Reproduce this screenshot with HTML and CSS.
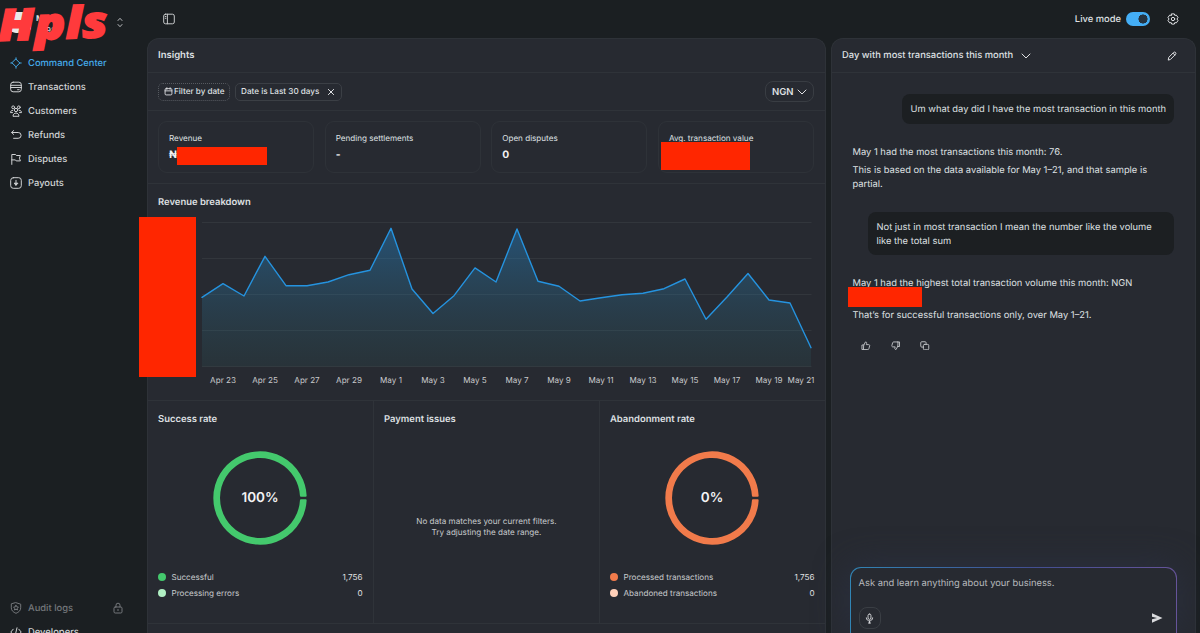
FILE: index.html
```html
<!DOCTYPE html>
<html lang="en">
<head>
<meta charset="utf-8">
<title>Command Center</title>
<link rel="stylesheet" href="styles.css">
</head>
<body>
<div class="app">
  <aside class="sidebar">
    <div class="account">
      <div class="avatar"></div>
      <div class="account-text"><b>M</b><span>988</span></div>
      <svg class="switcher" viewBox="0 0 8 12"><path d="M2 4l2-2.200L6 4M2 8l2 2.200L6 8"/></svg>
      <div class="scribble">Hpls</div>
    </div>
    <nav class="nav">
      <a class="active"><svg viewBox="0 0 12 12"><path d="M6 2.200L9.800 6 6 9.800 2.200 6zM6 .8v1.400M6 9.800v1.400M.8 6h1.400M9.800 6h1.400"/></svg>Command Center</a>
      <a><svg viewBox="0 0 12 12"><rect x=".7" y="1.200" width="10.600" height="9.600" rx="2.400"/><path d="M.7 4.300h10.600M.7 6.500h10.600M7.600 8.700h1.600"/></svg>Transactions</a>
      <a><svg viewBox="0 0 12 12"><circle cx="6" cy="5" r="1.700"/><circle cx="3.200" cy="2.300" r="1.400"/><circle cx="8.800" cy="2.300" r="1.400"/><path d="M3 10.900c0-3.900 6-3.900 6 0zM2.700 5.300C1.300 5.300.5 6.200.5 7.600h2M9.300 5.300c1.400 0 2.200.9 2.200 2.300h-2"/></svg>Customers</a>
      <a><svg viewBox="0 0 12 12"><path d="M3.600 1.600L1.600 3.500l2 1.900M1.800 3.500h6.400a2.900 2.900 0 0 1 0 5.800H3.600"/></svg>Refunds</a>
      <a><svg viewBox="0 0 12 12"><path d="M1.800 11.400V1.500h3.800l.8 1h4l-1 2.700 1 2.700H6.200l-.8-1H1.800"/></svg>Disputes</a>
      <a><svg viewBox="0 0 12 12"><rect x=".7" y=".7" width="10.600" height="10.600" rx="2.600"/><path fill="currentColor" d="M6 3.300v5M4.300 6.500L6 8.200l1.700-1.700z"/></svg>Payouts</a>
    </nav>
    <nav class="nav nav-bottom">
      <a class="locked"><svg viewBox="0 0 12 12"><path d="M6 .7l4.700 1.500v3.600c0 2.700-2 4.500-4.700 5.500C3.300 10.300 1.300 8.500 1.300 5.800V2.200z"/><path d="M6 3.300l.8 1.500 1.600.3-1.100 1.200.2 1.700L6 7.300 4.500 8l.2-1.700-1.100-1.200 1.600-.3z"/></svg>Audit logs
        <svg class="lock" viewBox="0 0 10 12"><rect x="1" y="5" width="8" height="6" rx="1.200"/><path d="M3 5V3.200a2 2 0 0 1 4 0V5M5 7.400v1.200"/></svg></a>
      <a><svg viewBox="0 0 12 12"><path d="M3.200 3.200L.8 6l2.400 2.800M8.800 3.200L11.200 6 8.800 8.800M7 1.800L5 10.200"/></svg>Developers</a>
    </nav>
  </aside>

  <div class="workspace">
    <header class="topbar">
      <svg class="panel-icon" viewBox="0 0 12 12"><rect x=".7" y="1.200" width="10.600" height="9.600" rx="1.800"/><path d="M4.400 1.200v9.600M2.300 3.500h.6M2.300 5.300h.6"/></svg>
      <div class="live">Live mode<span class="toggle"></span></div>
      <svg class="gear" viewBox="0 0 12 12"><path d="M4.700.9h2.600l.5 1.500 1.500-.3 1.700 2.300L10 6l1 1.600-1.700 2.300-1.500-.3-.5 1.500H4.700l-.5-1.500-1.500.3L1 7.600 2 6 1 4.400l1.700-2.300 1.500.3z"/><circle cx="6" cy="6" r="1.700"/></svg>
    </header>
    <div class="panels">
      <main class="panel insights">
        <h1 class="panel-head">Insights</h1>
        <div class="filters">
          <span class="chip dotted"><svg viewBox="0 0 10 10"><rect x="1.200" y="1.800" width="7.600" height="7" rx="1.200"/><path d="M1.200 4.300h7.600M3.200.8v1.800M6.800.8v1.800"/></svg>Filter by date</span>
          <span class="chip">Date is Last 30 days<svg class="close" viewBox="0 0 10 10"><path d="M2.400 2.400l5.200 5.200M7.600 2.400L2.400 7.600"/></svg></span>
          <span class="currency">NGN<svg viewBox="0 0 10 10"><path d="M1 3l4 4 4-4"/></svg></span>
        </div>
        <section class="cards">
          <div class="card"><span>Revenue</span><b>₦</b><i class="mask mask-revenue"></i></div>
          <div class="card"><span>Pending settlements</span><b>-</b></div>
          <div class="card"><span>Open disputes</span><b>0</b></div>
          <div class="card"><span>Avg. transaction value</span><b>&nbsp;</b><i class="mask mask-average"></i></div>
        </section>
        <section class="breakdown">
          <h2>Revenue breakdown</h2>
          <svg class="chart" viewBox="147 210 678 180">
            <defs><linearGradient id="fill" x1="0" y1="228" x2="0" y2="367" gradientUnits="userSpaceOnUse"><stop offset="0" stop-color="#2495e8" stop-opacity=".37"/><stop offset=".6" stop-color="#2f8bb5" stop-opacity=".19"/><stop offset="1" stop-color="#338a8a" stop-opacity=".09"/></linearGradient></defs>
            <path class="grid" d="M202 222.500H811.500M202 258.500H811.500M202 294.500H811.500M202 330.500H811.500M202 366.500H811.500"/>
            <path class="area" fill="url(#fill)" d="M202 297.300L223 283.700 244 296 265 256.300 286 285.700 307 285.700 328 282 349 274.700 370 270.300 391 228.300 412 289 433 313.500 454 295.700 475 267.900 496 282 517 229 538 281.300 559 286.300 580 301 601 297.800 622 294.700 643 293.200 664 288.700 685 279 706 319.300 727 297 748 273.500 769 300 790 303 811 347.700V366.500H202z"/>
            <path class="line" d="M202 297.300L223 283.700 244 296 265 256.300 286 285.700 307 285.700 328 282 349 274.700 370 270.300 391 228.300 412 289 433 313.500 454 295.700 475 267.900 496 282 517 229 538 281.300 559 286.300 580 301 601 297.800 622 294.700 643 293.200 664 288.700 685 279 706 319.300 727 297 748 273.500 769 300 790 303 811 347.700"/>
            <g class="ticks"><text x="223" y="383.200">Apr 23</text><text x="265" y="383.200">Apr 25</text><text x="307" y="383.200">Apr 27</text><text x="349" y="383.200">Apr 29</text><text x="391" y="383.200">May 1</text><text x="433" y="383.200">May 3</text><text x="475" y="383.200">May 5</text><text x="517" y="383.200">May 7</text><text x="559" y="383.200">May 9</text><text x="601" y="383.200">May 11</text><text x="643" y="383.200">May 13</text><text x="685" y="383.200">May 15</text><text x="727" y="383.200">May 17</text><text x="769" y="383.200">May 19</text><text x="801" y="383.200">May 21</text></g>
          </svg>
          <i class="mask mask-axis"></i>
        </section>
        <section class="rates">
          <div class="rate">
            <h2>Success rate</h2>
            <div class="donut green"><svg viewBox="0 0 94 94"><path d="M92.650 49.200A45.700 45.700 0 1 1 92.650 44.800L87.950 44.800A41 41 0 1 0 87.950 49.200z"/></svg><b>100%</b></div>
            <ul><li><i></i>Successful<span>1,756</span></li><li><i class="light"></i>Processing errors<span>0</span></li></ul>
          </div>
          <div class="rate">
            <h2>Payment issues</h2>
            <p class="empty">No data matches your current filters.<br>Try adjusting the date range.</p>
          </div>
          <div class="rate">
            <h2>Abandonment rate</h2>
            <div class="donut orange"><svg viewBox="0 0 94 94"><path d="M92.650 49.200A45.700 45.700 0 1 1 92.650 44.800L87.950 44.800A41 41 0 1 0 87.950 49.200z"/></svg><b>0%</b></div>
            <ul class="warm"><li><i></i>Processed transactions<span>1,756</span></li><li><i class="light"></i>Abandoned transactions<span>0</span></li></ul>
          </div>
        </section>
      </main>

      <section class="panel chat">
        <div class="panel-head chat-head">Day with most transactions this month
          <svg class="chev" viewBox="0 0 10 10"><path d="M1 3l4 4 4-4"/></svg>
          <svg class="pencil" viewBox="0 0 10 10"><path d="M1.300 8.700l.5-2.400L6.700 1.400c1.200-1.100 3 .6 1.900 1.900L3.700 8.200zM6 2.200l1.800 1.800"/></svg>
        </div>
        <div class="messages">
          <div class="bubble">Um what day did I have the most transaction in this month</div>
          <div class="reply first"><p>May 1 had the most transactions this month: 76.</p><p>This is based on the data available for May 1–21, and that sample is<br>partial.</p></div>
          <div class="bubble second">Not just in most transaction I mean the number like the volume<br>like the total sum</div>
          <div class="reply last"><p>May 1 had the highest total transaction volume this month: NGN<br>&nbsp;</p><p>That’s for successful transactions only, over May 1–21.</p><i class="mask mask-volume"></i></div>
          <div class="actions">
            <svg viewBox="0 0 10 10"><path d="M3 4.200L4.700 1c1.200 0 1.500.8 1.200 1.700L5.600 3.800h2.500c.8 0 1.200.6 1 1.300l-.8 3c-.2.600-.5.900-1.100.9H3zM3 4.200H1v4.800h2"/></svg>
            <svg viewBox="0 0 10 10"><path d="M7 5.800L5.300 9c-1.200 0-1.500-.8-1.200-1.700l.3-1.100H1.900c-.8 0-1.200-.6-1-1.300l.8-3c.2-.6.500-.9 1.100-.9H7zM7 5.800h2V1H7"/></svg>
            <svg viewBox="0 0 10 10"><rect x="3.600" y="3.600" width="5.600" height="5.600" rx="1"/><path d="M3.600 6.400H1.800a1 1 0 0 1-1-1V1.800a1 1 0 0 1 1-1h3.600a1 1 0 0 1 1 1v1.800"/></svg>
          </div>
        </div>
        <div class="composer">
          <div class="prompt">Ask and learn anything about your business.</div>
          <div class="tools">
            <span class="mic"><svg viewBox="0 0 10 12"><rect x="3.400" y="1" width="3.200" height="6" rx="1.600"/><path d="M1.500 5.300c0 4.600 7 4.600 7 0M5 8.800v2.200M3.800 11h2.400"/></svg></span>
            <svg class="send" viewBox="0 0 12 12"><path d="M1 1.200L11.500 6 1 10.800V7.300L6 6 1 4.700z"/></svg>
          </div>
        </div>
      </section>
    </div>
  </div>
</div>
</body>
</html>
```
FILE: styles.css
```css
* { box-sizing: border-box; }
body { margin: 0; height: 633px; overflow: hidden; background: #1b1f22; color: #dfe0e3; font: 9.350px/13px Inter, "Noto Sans", sans-serif; text-rendering: geometricPrecision; }
svg { fill: none; stroke: currentColor; stroke-width: 1; stroke-linecap: round; stroke-linejoin: round; flex: none; }
h1, h2, p, ul { margin: 0; padding: 0; }
ul { list-style: none; }
.app { display: flex; height: 633px; overflow: hidden; }
.sidebar { width: 147px; flex: none; display: flex; flex-direction: column; }
.account { position: relative; height: 50.500px; flex: none; display: flex; padding: 12px 0 0 10px; }
.avatar { width: 21px; height: 21px; border-radius: 6px; background: #e8e8ea; }
.account-text { margin: 0 0 0 5px; font-size: 8px; line-height: 12px; display: flex; flex-direction: column; width: 30px; }
.account-text span { padding-left: 10px; }
.switcher { position: absolute; left: 116px; top: 16px; width: 8px; height: 13px; color: #b9bbbe; }
.scribble { position: absolute; left: -2px; top: -6px; font: italic 900 44px/60px "Noto Sans", sans-serif; color: #ff3a3c; -webkit-text-stroke: 1.500px #ff3a3c; transform-origin: 0 50%; transform: rotate(-2deg) scaleX(1.160); }
.nav { display: flex; flex-direction: column; padding: 0 0 0 10px; }
.nav a { display: flex; align-items: center; height: 24.100px; flex: none; font-size: 9.400px; line-height: 12px; font-weight: 500; color: #d0d2d4; padding-top: 2px; }
.nav svg { width: 12px; height: 12px; margin: -2px 6px 0 0; }
.nav .active { color: #45abea; }
.nav-bottom { margin-top: auto; height: 37.500px; flex: none; }
.nav .locked { color: #74777b; }
.nav .lock { width: 10px; height: 12px; margin: -2px 24px 0 auto; }

.workspace { flex: 1; display: flex; flex-direction: column; min-width: 0; }
.topbar { height: 38px; flex: none; display: flex; align-items: center; padding: 0 21px 0 16px; }
.panel-icon { width: 12px; height: 12px; color: #c6c8ca; }
.live { margin-left: auto; display: flex; align-items: center; gap: 5px; font-size: 9.400px; font-weight: 500; }
.toggle { width: 24px; height: 14px; border-radius: 7px; background: radial-gradient(circle at 17px 7px, #263441 4.300px, #44aef6 4.800px); }
.gear { width: 12px; height: 12px; margin-left: 17px; }
.panels { flex: 1; min-height: 0; display: flex; gap: 5px; padding-right: 4px; }
.panel { background: #272a31; border: 1px solid #2e3238; border-bottom: 0; border-radius: 12px 12px 0 0; }
.panel-head { height: 34px; display: flex; align-items: center; padding: 0 10px; font-size: 9.500px; font-weight: 600; border-bottom: 1px solid #2f3339; }
.chat-head { font-size: 9.400px; font-weight: 500; }
.insights { width: 679px; flex: none; }
.filters { display: flex; align-items: center; height: 38px; padding: 0 11px 0 10px; border-bottom: 1px solid #2f3339; }
.chip { display: flex; align-items: center; height: 18px; border: 1px solid #3b3f45; border-radius: 5px; padding: 0 5px; font-size: 8.150px; font-weight: 500; margin-right: 5px; white-space: nowrap; }
.chip.dotted { border: 1px dotted #565a60; padding: 0 4.500px; }
.chip.dotted svg { margin-right: 1.500px; }
.chip svg { width: 9px; height: 9px; }
.chip .close { width: 10px; height: 10px; margin: 0 0 0 7px; }
.currency { margin-left: auto; display: flex; align-items: center; justify-content: space-between; width: 49px; height: 21px; border: 1px solid #393d43; border-radius: 8px; padding: 1px 6px 0; font-size: 9.500px; font-weight: 600; }
.currency svg { width: 10px; height: 10px; }
.cards { display: grid; grid-template-columns: repeat(4, 1fr); gap: 10.500px; height: 73px; padding: 10px 11px 10px 10px; border-bottom: 1px solid #2f3339; }
.card { position: relative; border: 1px solid #2e3238; border-radius: 9px; padding: 10px 10px 0; font-size: 8.100px; display: flex; flex-direction: column; gap: 4px; }
.card b { font-size: 10.300px; font-weight: 700; color: #f1f1f2; }
.mask { position: absolute; background: #ff2600; }
.mask-revenue { left: 18px; top: 25px; width: 90px; height: 18px; }
.mask-average { left: 2px; top: 20px; width: 89px; height: 28px; }
.breakdown { position: relative; height: 217px; border-bottom: 1px solid #2f3339; padding-top: 12px; }
h2 { font-size: 9.450px; line-height: 14px; font-weight: 600; padding-left: 10px; }
.chart { display: block; width: 678px; height: 180px; margin: 0 0 0 -1px; }
.grid { stroke: #32363c; stroke-linecap: butt; }
.area { stroke: none; }
.line { stroke: #2593df; stroke-width: 1.400; }
.ticks { fill: #c7c9cb; stroke: none; font-size: 8.100px; text-anchor: middle; }
.mask-axis { left: -9px; top: 33px; width: 57px; height: 160px; }
.rates { display: grid; grid-template-columns: 226px 226px 1fr; height: 223px; border-bottom: 1px solid #2f3339; }
.rate { border-right: 1px solid #2f3339; padding-top: 12px; }
.rate:last-child { border-right: 0; }
.donut { width: 94px; height: 94px; margin: 24px 0 0 65px; display: grid; place-items: center; }
.donut svg, .donut b { grid-area: 1 / 1; }
.donut svg { width: 94px; height: 94px; stroke-width: 2; fill: currentColor; }
.donut b { font-size: 13.500px; font-weight: 600; color: #f3f3f4; }
.green svg { color: #44c96d; }
.orange svg { color: #f17b4b; }
.rate ul { margin: 24px 10.500px 0 10px; font-size: 8.100px; color: #c8cacd; }
.rate li { display: flex; align-items: center; height: 16px; }
.rate li i { width: 8px; height: 8px; border-radius: 50%; background: #44c96d; margin-right: 5.500px; }
.rate li i.light { background: #b0efc3; }
.warm li i { background: #f17b4b; }
.rate .warm li i.light { background: #ffd0b9; }
.rate li span { margin-left: auto; color: #e1e2e4; }
.empty { margin-top: 89px; text-align: center; font-size: 8.100px; line-height: 10.500px; color: #c8cacd; }

.chat { flex: 1; min-width: 0; display: flex; flex-direction: column; }
.chev { width: 10px; height: 10px; margin-left: 8px; }
.pencil { width: 10px; height: 10px; margin-left: auto; margin-right: 8px; }
.messages { flex: 1; display: flex; flex-direction: column; padding: 21px 21px 0 20.500px; }
.bubble { align-self: flex-end; background: #1c1f22; border-radius: 8px; padding: 9px 8px 7px; line-height: 13.500px; white-space: nowrap; }
.second { width: 306px; padding-left: 8.500px; }
.reply { position: relative; line-height: 13.500px; white-space: nowrap; }
.reply p + p { margin-top: 5px; }
.first { margin: 22px 0 21px; }
.last { margin-top: 22px; }
.mask-volume { left: -5px; top: 9.500px; width: 74px; height: 20px; }
.actions { display: flex; gap: 20px; margin: 18px 0 0 8.500px; color: #bfc1c4; }
.actions svg { width: 9.500px; height: 9.500px; }
.composer { height: 66px; flex: none; margin: 0 18px; border: 1px solid transparent; border-bottom: 0; border-radius: 11px 11px 0 0; padding: 9px 8px 8px 7.500px; background: linear-gradient(#272a31, #272a31) padding-box, linear-gradient(90deg, #3185b5, #424f91 55%, #66549a) border-box; box-shadow: 0 0 34px #2b3040; }
.prompt { color: #b8babe; }
.tools { display: flex; justify-content: space-between; align-items: center; margin-top: 17px; }
.mic { width: 22px; height: 22px; border: 1px solid #3a3e44; border-radius: 8px; display: grid; place-items: center; }
.mic svg { width: 9px; height: 11px; }
.send { width: 12px; height: 12px; margin-right: 5px; fill: #d9dadd; stroke: none; }
```
